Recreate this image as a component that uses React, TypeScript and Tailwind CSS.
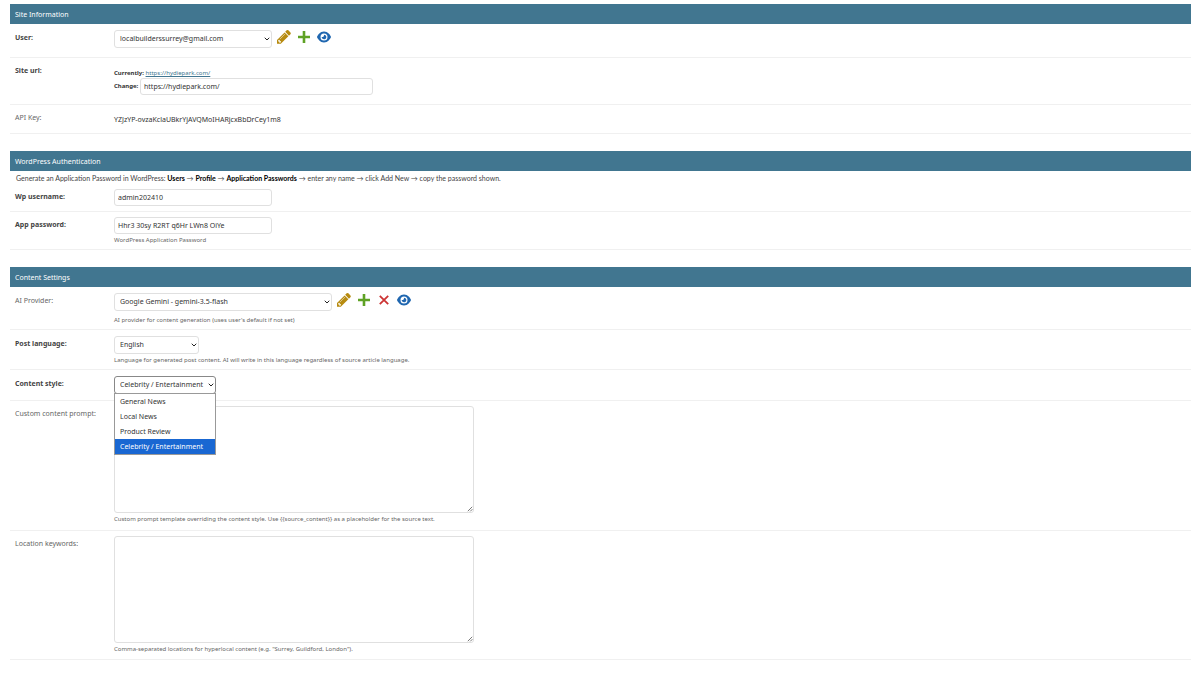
import React, { useState } from 'react';
import { FaEye } from 'react-icons/fa6';
import { ChevronDown } from 'lucide-react';

const CONTENT_STYLES = ['General News', 'Local News', 'Product Review', 'Celebrity / Entertainment'];

const inputClass = 'h-[17px] rounded-[3px] border border-[#e0e0e0] bg-white px-[3px] text-[7px] text-[#333] outline-none';

function Module({ title, children }: { title: string; children: React.ReactNode }) {
  return (
    <fieldset className="mb-[17px] min-w-0">
      <h2 className="flex h-5 items-center bg-[#417690] px-[5px] pt-[2px] text-[7px] text-white">{title}</h2>
      {children}
    </fieldset>
  );
}

type RowProps = { label: string; htmlFor?: string; required?: boolean; help?: string; className?: string; children: React.ReactNode };

function Row({ label, htmlFor, required, help, className, children }: RowProps) {
  return (
    <div className={`flex border-b border-[#f0f0f0] px-[5px] ${className ?? 'pt-[5px] pb-[5px]'}`}>
      <label
        htmlFor={htmlFor}
        className={`w-[99px] shrink-0 pt-[3px] text-[7px] leading-[10px] ${required ? 'font-bold text-[#444]' : 'text-[#666]'}`}
      >
        {label}
      </label>
      <div className="min-w-0 flex-1">
        {children}
        {help && <p className="text-[6px] leading-[12px] text-[#666]">{help}</p>}
      </div>
    </div>
  );
}

type SelectProps = { id: string; options: string[]; width: string; value?: string; border?: string; onChange?: (v: string) => void; onClick?: () => void };

function Select({ id, options, width, value, border, onChange, onClick }: SelectProps) {
  return (
    <div className={`relative ${width}`}>
      <select
        id={id}
        value={value ?? options[0]}
        onChange={e => onChange?.(e.target.value)}
        onMouseDown={e => { if (onClick) { e.preventDefault(); onClick(); } }}
        className={`block h-[18px] w-full appearance-none rounded-[3px] border bg-white pl-[5px] text-[7px] text-[#333] outline-none ${border ?? 'border-[#e0e0e0]'}`}
      >
        {options.map(o => <option key={o}>{o}</option>)}
      </select>
      <ChevronDown className="pointer-events-none absolute top-[5px] right-px size-2 text-[#222]" strokeWidth={3} />
    </div>
  );
}

function RelatedLinks({ name, canDelete }: { name: string; canDelete?: boolean }) {
  return (
    <div className="flex items-center gap-[6px] pl-[5px]">
      <a href="#change" aria-label={`Change ${name}`}>
        <svg viewBox="128 148 1536 1536" className="size-[14px]" fill="#b78b10">
          <path d="M491 1536l91-91-235-235-91 91v107h128v128h107zm523-928q0-22-22-22-10 0-17 7l-542 542q-7 7-7 17 0 22 22 22 10 0 17-7l542-542q7-7 7-17zm-54-192l416 416-832 832h-416v-416zm683 96q0 53-37 90l-166 166-416-416 166-165q36-38 90-38 53 0 91 38l235 234q37 39 37 91z" />
        </svg>
      </a>
      <a href="#add" aria-label={`Add ${name}`}>
        <svg viewBox="0 0 14 14" className="size-[14px]" fill="#5fa225">
          <path d="M5.7 1h2.6v4.7H13v2.6H8.3V13H5.7V8.3H1V5.7h4.7z" />
        </svg>
      </a>
      {canDelete && (
        <a href="#delete" aria-label={`Delete ${name}`}>
          <svg viewBox="0 0 14 14" className="size-[14px]" stroke="#cc3434" strokeWidth="1.8">
            <path d="M2.8 2.8l8.4 8.4M11.2 2.8l-8.4 8.4" />
          </svg>
        </a>
      )}
      <a href="#view" aria-label={`View ${name}`}>
        <FaEye className="size-[14px] text-[#2067b0]" />
      </a>
    </div>
  );
}

function TextArea({ id }: { id: string }) {
  return (
    <div className="relative w-[360px] max-w-full">
      <textarea id={id} className="block h-[107px] w-full resize-none rounded-[3px] border border-[#e0e0e0] bg-white p-1 text-[7px] text-[#333] outline-none" />
      <svg viewBox="0 0 6 6" className="pointer-events-none absolute right-px bottom-px size-[6px]" stroke="#555" strokeWidth="0.8">
        <path d="M0.8 5.2l4.4-4.4M3.2 5.4l2.2-2.2" />
      </svg>
    </div>
  );
}

export default function SiteChangeForm() {
  const [url, setUrl] = useState('https://hydiepark.com/');
  const [username, setUsername] = useState('admin202410');
  const [password, setPassword] = useState('Hhr3 30sy R2RT q6Hr LWn8 OiYe');
  const [style, setStyle] = useState('Celebrity / Entertainment');
  const [styleOpen, setStyleOpen] = useState(true);

  return (
    <form className="bg-white pt-1 pr-[9px] pl-[10px] font-['Noto_Sans',sans-serif] text-[7px] text-[#333]">
      <Module title="Site Information">
        <Row label="User:" htmlFor="user" required className="pt-[6px] pb-[9px]">
          <div className="flex items-start">
            <Select id="user" options={['localbuilderssurrey@gmail.com']} width="w-[158px]" />
            <RelatedLinks name="user" />
          </div>
        </Row>
        <Row label="Site url:" htmlFor="url" required className="pt-[5px] pb-[9px]">
          <div className="pt-[6px] text-[6px] leading-[9px]">
            <p><b>Currently:</b> <a href="https://hydiepark.com/" className="text-[#417690] underline">https://hydiepark.com/</a></p>
            <div className="flex items-center">
              <b className="w-[26px]">Change:</b>
              <input id="url" type="url" value={url} onChange={e => setUrl(e.target.value)} className={`w-[233px] ${inputClass}`} />
            </div>
          </div>
        </Row>
        <Row label="API Key:">
          <p className="pt-[5px] pb-[3px] text-[7px] leading-[10px]">YZJzYP-ovzaKclaUBkrYjAVQMoIHARjcxBbDrCey1m8</p>
        </Row>
      </Module>

      <Module title="WordPress Authentication">
        <p className="px-[6px] pt-[2px] pb-px font-[Lato,'Noto_Sans',sans-serif] text-[7px] leading-[10px] text-[#444]">
          Generate an Application Password in WordPress: <b className="text-black">Users</b> → <b className="text-black">Profile</b> → <b className="text-black">Application Passwords</b> → enter any name → click Add New → copy the password shown.
        </p>
        <Row label="Wp username:" htmlFor="username" required>
          <input id="username" type="text" value={username} onChange={e => setUsername(e.target.value)} className={`block w-[158px] ${inputClass}`} />
        </Row>
        <Row label="App password:" htmlFor="password" required help="WordPress Application Password" className="pt-[5px] pb-[3px]">
          <input id="password" type="text" value={password} onChange={e => setPassword(e.target.value)} className={`block w-[158px] ${inputClass}`} />
        </Row>
      </Module>

      <Module title="Content Settings">
        <Row label="AI Provider:" htmlFor="provider" help="AI provider for content generation (uses user's default if not set)" className="pt-[6px] pb-[3px]">
          <div className="mb-[3px] flex items-start">
            <Select id="provider" options={['Google Gemini - gemini-3.5-flash']} width="w-[218px]" />
            <RelatedLinks name="AI provider" canDelete />
          </div>
        </Row>
        <Row label="Post language:" htmlFor="language" required help="Language for generated post content. AI will write in this language regardless of source article language." className="pt-[6px] pb-[3px]">
          <Select id="language" options={['English']} width="w-[85px]" />
        </Row>
        <Row label="Content style:" htmlFor="style" required className="pt-[6px] pb-[6px]">
          <div className="relative w-[102px]">
            <Select id="style" options={CONTENT_STYLES} width="w-full" border="border-[#888]" value={style} onChange={setStyle} onClick={() => setStyleOpen(!styleOpen)} />
            {styleOpen && (
              <ul role="listbox" aria-label="Content style" className="absolute top-full left-0 z-10 -mt-px w-full border border-[#999] bg-white">
                {CONTENT_STYLES.map(s => (
                  <li
                    key={s}
                    role="option"
                    aria-selected={s === style}
                    onClick={() => { setStyle(s); setStyleOpen(false); }}
                    className={`pl-[5px] text-[7px] leading-[15px] whitespace-nowrap ${s === style ? 'bg-[#1967d2] text-white' : 'text-[#333]'}`}
                  >
                    {s}
                  </li>
                ))}
              </ul>
            )}
          </div>
        </Row>
        <Row label="Custom content prompt:" htmlFor="prompt" help="Custom prompt template overriding the content style. Use {{source_content}} as a placeholder for the source text." className="pt-[5px] pb-[5px]">
          <TextArea id="prompt" />
        </Row>
        <Row label="Location keywords:" htmlFor="keywords" help={'Comma-separated locations for hyperlocal content (e.g. "Surrey, Guildford, London").'} className="pt-[5px] pb-[4px]">
          <TextArea id="keywords" />
        </Row>
      </Module>
    </form>
  );
}
